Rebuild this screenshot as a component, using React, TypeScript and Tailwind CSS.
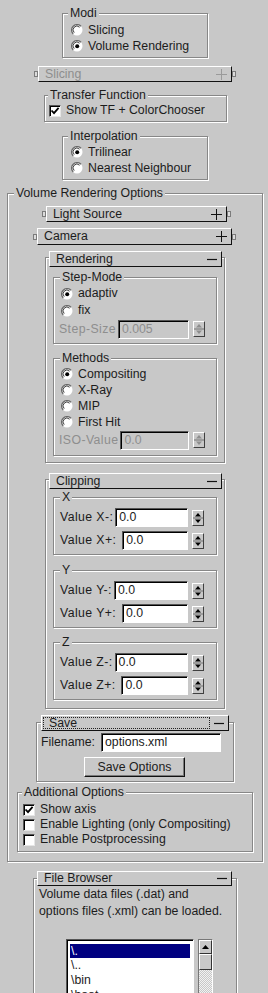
import React from "react";

type Kids = { children?: React.ReactNode };

function Groove({
  label,
  className = "",
  labelClass = "left-[5px]",
  children,
}: Kids & { label?: string; className?: string; labelClass?: string }) {
  return (
    <div
      className={`relative shrink-0 border border-[#878787] shadow-[inset_1px_1px_0_#fff,1px_1px_0_#fff] ${className}`}
    >
      {label && (
        <span className={`absolute -top-[8px] bg-[#c8c8c8] px-[2px] leading-[14px] ${labelClass}`}>
          {label}
        </span>
      )}
      {children}
    </div>
  );
}

function RadioIcon({ checked }: { checked?: boolean }) {
  return (
    <svg width="12" height="12" viewBox="0 0 12 12" className="shrink-0">
      <circle cx="6" cy="6" r="5.5" fill="#fff" />
      <path d="M10 2.2 A5.3 5.3 0 0 0 2.2 10" stroke="#6a6a6a" strokeWidth="1.3" fill="none" />
      <path d="M8.6 3.2 A3.8 3.8 0 0 0 3.2 8.6" stroke="#2a2a2a" strokeWidth="0.9" fill="none" />
      {checked && <circle cx="6.2" cy="6.2" r="2" fill="#000" />}
    </svg>
  );
}

function Radio({ label, checked, h = "h-[16px]" }: { label: string; checked?: boolean; h?: string }) {
  return (
    <div className={`flex items-center gap-[5px] ${h}`}>
      <RadioIcon checked={checked} />
      <span>{label}</span>
    </div>
  );
}

function Check({ label, checked }: { label: string; checked?: boolean }) {
  return (
    <div className="flex items-center gap-[5px] h-[15px]">
      <span className="w-[12px] h-[12px] shrink-0 bg-white border border-t-[#555] border-l-[#555] border-b-[#e6e6e6] border-r-[#e6e6e6] shadow-[inset_1px_1px_0_#000] flex items-center justify-center">
        {checked && (
          <svg width="10" height="10" viewBox="0 0 10 10">
            <path d="M1.5 4.5 L4 7.2 L8.6 1.8" stroke="#000" strokeWidth="1.8" fill="none" />
          </svg>
        )}
      </span>
      <span>{label}</span>
    </div>
  );
}

function Handle() {
  return <span className="w-[4px] h-[6px] shrink-0 border border-[#7c7c7c] bg-[#dcdcdc]" />;
}

function Plus({ gray }: { gray?: boolean }) {
  const c = gray ? "#9a9a9a" : "#111";
  return (
    <svg width="11" height="11" viewBox="0 0 11 11">
      <path d="M0 5.5 H11 M5.5 0 V11" stroke={c} strokeWidth="1" />
    </svg>
  );
}

function Minus() {
  return (
    <svg width="10" height="3" viewBox="0 0 10 3">
      <path d="M0 1.5 H10" stroke="#111" strokeWidth="1.2" />
    </svg>
  );
}

function Bar({
  label,
  open,
  disabled,
  focus,
  className = "",
}: {
  label: string;
  open?: boolean;
  disabled?: boolean;
  focus?: boolean;
  className?: string;
}) {
  return (
    <div
      className={`relative z-10 shrink-0 flex items-center justify-between bg-[#c8c8c8] border border-t-white border-l-white border-b-[#111] border-r-[#111] ${className}`}
    >
      {focus ? (
        <span className="flex-1 mr-[4px] ml-[1px] h-[12px] flex items-center pl-[5px] border border-dotted border-[#222]">
          {label}
        </span>
      ) : (
        <span className={`pl-[6px] ${disabled ? "text-[#8e8e8e]" : ""}`}>{label}</span>
      )}
      <span className="pr-[4px] flex items-center">{open ? <Minus /> : <Plus gray={disabled} />}</span>
    </div>
  );
}

function Spinner({ disabled }: { disabled?: boolean }) {
  const c = disabled ? "#8e8e8e" : "#000";
  return (
    <span className="w-[12px] h-[16px] shrink-0 bg-[#c8c8c8] border border-t-white border-l-white border-b-[#404040] border-r-[#404040] flex items-center justify-center">
      <svg width="10" height="14" viewBox="0 0 10 14">
        <path d="M5 2 L8 5.5 L2 5.5 Z" fill={c} />
        <path d="M0 7 H10" stroke="#5a5a5a" strokeWidth="0.8" />
        <path d="M2 8.5 L8 8.5 L5 12 Z" fill={c} />
      </svg>
    </span>
  );
}

function Entry({ value, disabled, className = "" }: { value: string; disabled?: boolean; className?: string }) {
  return (
    <span
      className={`flex items-center min-w-0 h-[19px] pl-[3px] border border-t-[#555] border-l-[#555] border-b-white border-r-white shadow-[inset_1px_1px_0_#000] ${
        disabled ? "bg-[#c8c8c8] text-[#8e8e8e]" : "bg-white"
      } ${className}`}
    >
      {value}
    </span>
  );
}

function SpinRow({ label, value, disabled }: { label: string; value: string; disabled?: boolean }) {
  return (
    <div className="flex items-center w-full h-[19px]">
      <span className={`whitespace-pre tracking-[0.4px] ${disabled ? "text-[#8e8e8e]" : ""}`}>{label}</span>
      <Entry value={value} disabled={disabled} className="flex-1 ml-[2px]" />
      <span className="ml-[4px]">
        <Spinner disabled={disabled} />
      </span>
    </div>
  );
}

function Axis({ label, a, className }: { label: string; a: string; className: string }) {
  return (
    <Groove label={label} labelClass="left-[6px]" className={`ml-[7px] w-[164px] pt-[10px] pb-[4px] pl-[6px] pr-[12px] ${className}`}>
      <div className="flex flex-col gap-[4px]">
        <SpinRow label={`Value ${a}-:`} value="0.0" />
        <SpinRow label={`Value ${a}+: `} value="0.0" />
      </div>
    </Groove>
  );
}

export default function App() {
  return (
    <div className="w-[268px] h-[993px] overflow-hidden bg-[#c8c8c8] text-[#1c1c1c] text-[12.3px] leading-[15px] font-['Liberation_Sans',Arial,sans-serif] flex flex-col *:shrink-0">
      {/* Modi */}
      <Groove label="Modi" className="ml-[62px] mt-[13px] w-[146px] h-[45px] pt-[8px] pl-[8px]">
        <Radio label="Slicing" />
        <Radio label="Volume Rendering" checked />
      </Groove>

      {/* Slicing */}
      <div className="mt-[8px] ml-[34px] flex items-center">
        <Handle />
        <Bar label="Slicing" disabled className="w-[194px] h-[16px]" />
        <Handle />
      </div>

      {/* Transfer Function */}
      <Groove label="Transfer Function" labelClass="left-[3px]" className="ml-[44px] mt-[13px] w-[183px] h-[27px] pt-[7px] pl-[4px]">
        <Check label="Show TF + ColorChooser" checked />
      </Groove>

      {/* Interpolation */}
      <Groove label="Interpolation" className="ml-[62px] mt-[14px] w-[146px] h-[44px] pt-[7px] pl-[8px]">
        <Radio label="Trilinear" checked />
        <Radio label="Nearest Neighbour" />
      </Groove>

      {/* Volume Rendering Options */}
      <Groove label="Volume Rendering Options" labelClass="left-[6px]" className="ml-[7px] mt-[13px] w-[256px] pb-[9px] flex flex-col *:shrink-0">
        <div className="mt-[12px] ml-[34px] flex items-center">
          <Handle />
          <Bar label="Light Source" className="w-[181px] h-[16px]" />
          <Handle />
        </div>
        <div className="mt-[6px] ml-[25px] flex items-center">
          <Handle />
          <Bar label="Camera" className="w-[195px] h-[17px]" />
          <Handle />
        </div>

        {/* Rendering */}
        <div className="mt-[6px] ml-[37px] w-[180px] flex flex-col">
          <Bar label="Rendering" open className="ml-[4px] w-[173px] h-[16px]" />
          <Groove className="-mt-[10px] pb-[6px]">
            <Groove label="Step-Mode" labelClass="left-[6px]" className="mt-[19px] ml-[7px] w-[164px] pt-[7px] pb-[4px] pl-[7px] pr-[11px]">
              <Radio label="adaptiv" checked h="h-[17px]" />
              <Radio label="fix" h="h-[17px]" />
              <div className="h-[20px] -ml-[2px] flex items-center">
                <SpinRow label="Step-Size" value="0.005" disabled />
              </div>
            </Groove>
            <Groove label="Methods" labelClass="left-[6px]" className="mt-[14px] ml-[7px] w-[164px] pt-[7px] pb-[5px] pl-[7px] pr-[11px]">
              <Radio label="Compositing" checked />
              <Radio label="X-Ray" />
              <Radio label="MIP" />
              <Radio label="First Hit" />
              <div className="h-[20px] -ml-[2px] flex items-center">
                <SpinRow label="ISO-Value" value="0.0" disabled />
              </div>
            </Groove>
          </Groove>
        </div>

        {/* Clipping */}
        <div className="mt-[10px] ml-[37px] w-[180px] flex flex-col">
          <Bar label="Clipping" open className="ml-[4px] w-[173px] h-[16px]" />
          <Groove className="-mt-[10px] pb-[8px]">
            <Axis label="X" a="X" className="mt-[17px]" />
            <Axis label="Y" a="Y" className="mt-[15px]" />
            <Axis label="Z" a="Z" className="mt-[14px]" />
          </Groove>
        </div>

        {/* Save */}
        <div className="mt-[6px] ml-[28px] w-[198px] flex flex-col">
          <Bar label="Save" open focus className="ml-[5px] w-[188px] h-[16px]" />
          <Groove className="-mt-[9px] pb-[4px] flex flex-col">
            <div className="mt-[10px] pl-[4px] flex items-center">
              <span className="w-[60px]">Filename:</span>
              <Entry value="options.xml" className="w-[120px] h-[18px]" />
            </div>
            <button className="mt-[5px] ml-[47px] w-[101px] h-[20px] bg-[#c8c8c8] border border-t-white border-l-white border-b-[#111] border-r-[#111] shadow-[inset_-1px_-1px_0_#7a7a7a] flex items-center justify-center">
              Save Options
            </button>
          </Groove>
        </div>

        {/* Additional Options */}
        <Groove label="Additional Options" labelClass="left-[4px]" className="mt-[10px] ml-[9px] w-[236px] pt-[9px] pb-[4px] pl-[5px]">
          <Check label="Show axis" checked />
          <Check label="Enable Lighting (only Compositing)" />
          <Check label="Enable Postprocessing" />
        </Groove>
      </Groove>

      {/* File Browser */}
      <div className="mt-[9px] ml-[33px] w-[204px] flex flex-col">
        <Bar label="File Browser" open className="ml-[4px] w-[195px] h-[15px]" />
        <Groove className="-mt-[8px] h-[200px] flex flex-col">
          <div className="mt-[7px] pl-[5px] leading-[17px]">
            <div>Volume data files (.dat) and</div>
            <div>options files (.xml) can be loaded.</div>
          </div>
          <div className="mt-[19px] ml-[32px] flex">
            <div className="w-[128px] h-[80px] bg-white border border-t-[#555] border-l-[#555] border-b-white border-r-white shadow-[inset_1px_1px_0_#000] pt-[4px] px-[3px]">
              <div className="bg-[#000080] text-white h-[14px] leading-[14px] pl-[1px]">\.</div>
              <div className="h-[15px] leading-[15px] pl-[1px]">\..</div>
              <div className="h-[15px] leading-[15px] pl-[1px]">\bin</div>
              <div className="h-[15px] leading-[15px] pl-[1px]">\boot</div>
            </div>
            <div className="ml-[4px] w-[15px] h-[80px] flex flex-col border border-t-[#777] border-l-[#777] border-b-white border-r-white">
              <div className="h-[14px] bg-[#c8c8c8] border border-t-white border-l-white border-b-[#333] border-r-[#333] flex items-center justify-center">
                <svg width="7" height="4" viewBox="0 0 7 4">
                  <path d="M3.5 0 L7 4 L0 4 Z" fill="#000" />
                </svg>
              </div>
              <div className="h-[16px] bg-[#c8c8c8] border border-t-white border-l-white border-b-[#333] border-r-[#333]" />
              <div className="flex-1 bg-[repeating-conic-gradient(#f2f2f2_0_25%,#c8c8c8_0_50%)] bg-[length:2px_2px]" />
            </div>
          </div>
        </Groove>
      </div>
    </div>
  );
}
